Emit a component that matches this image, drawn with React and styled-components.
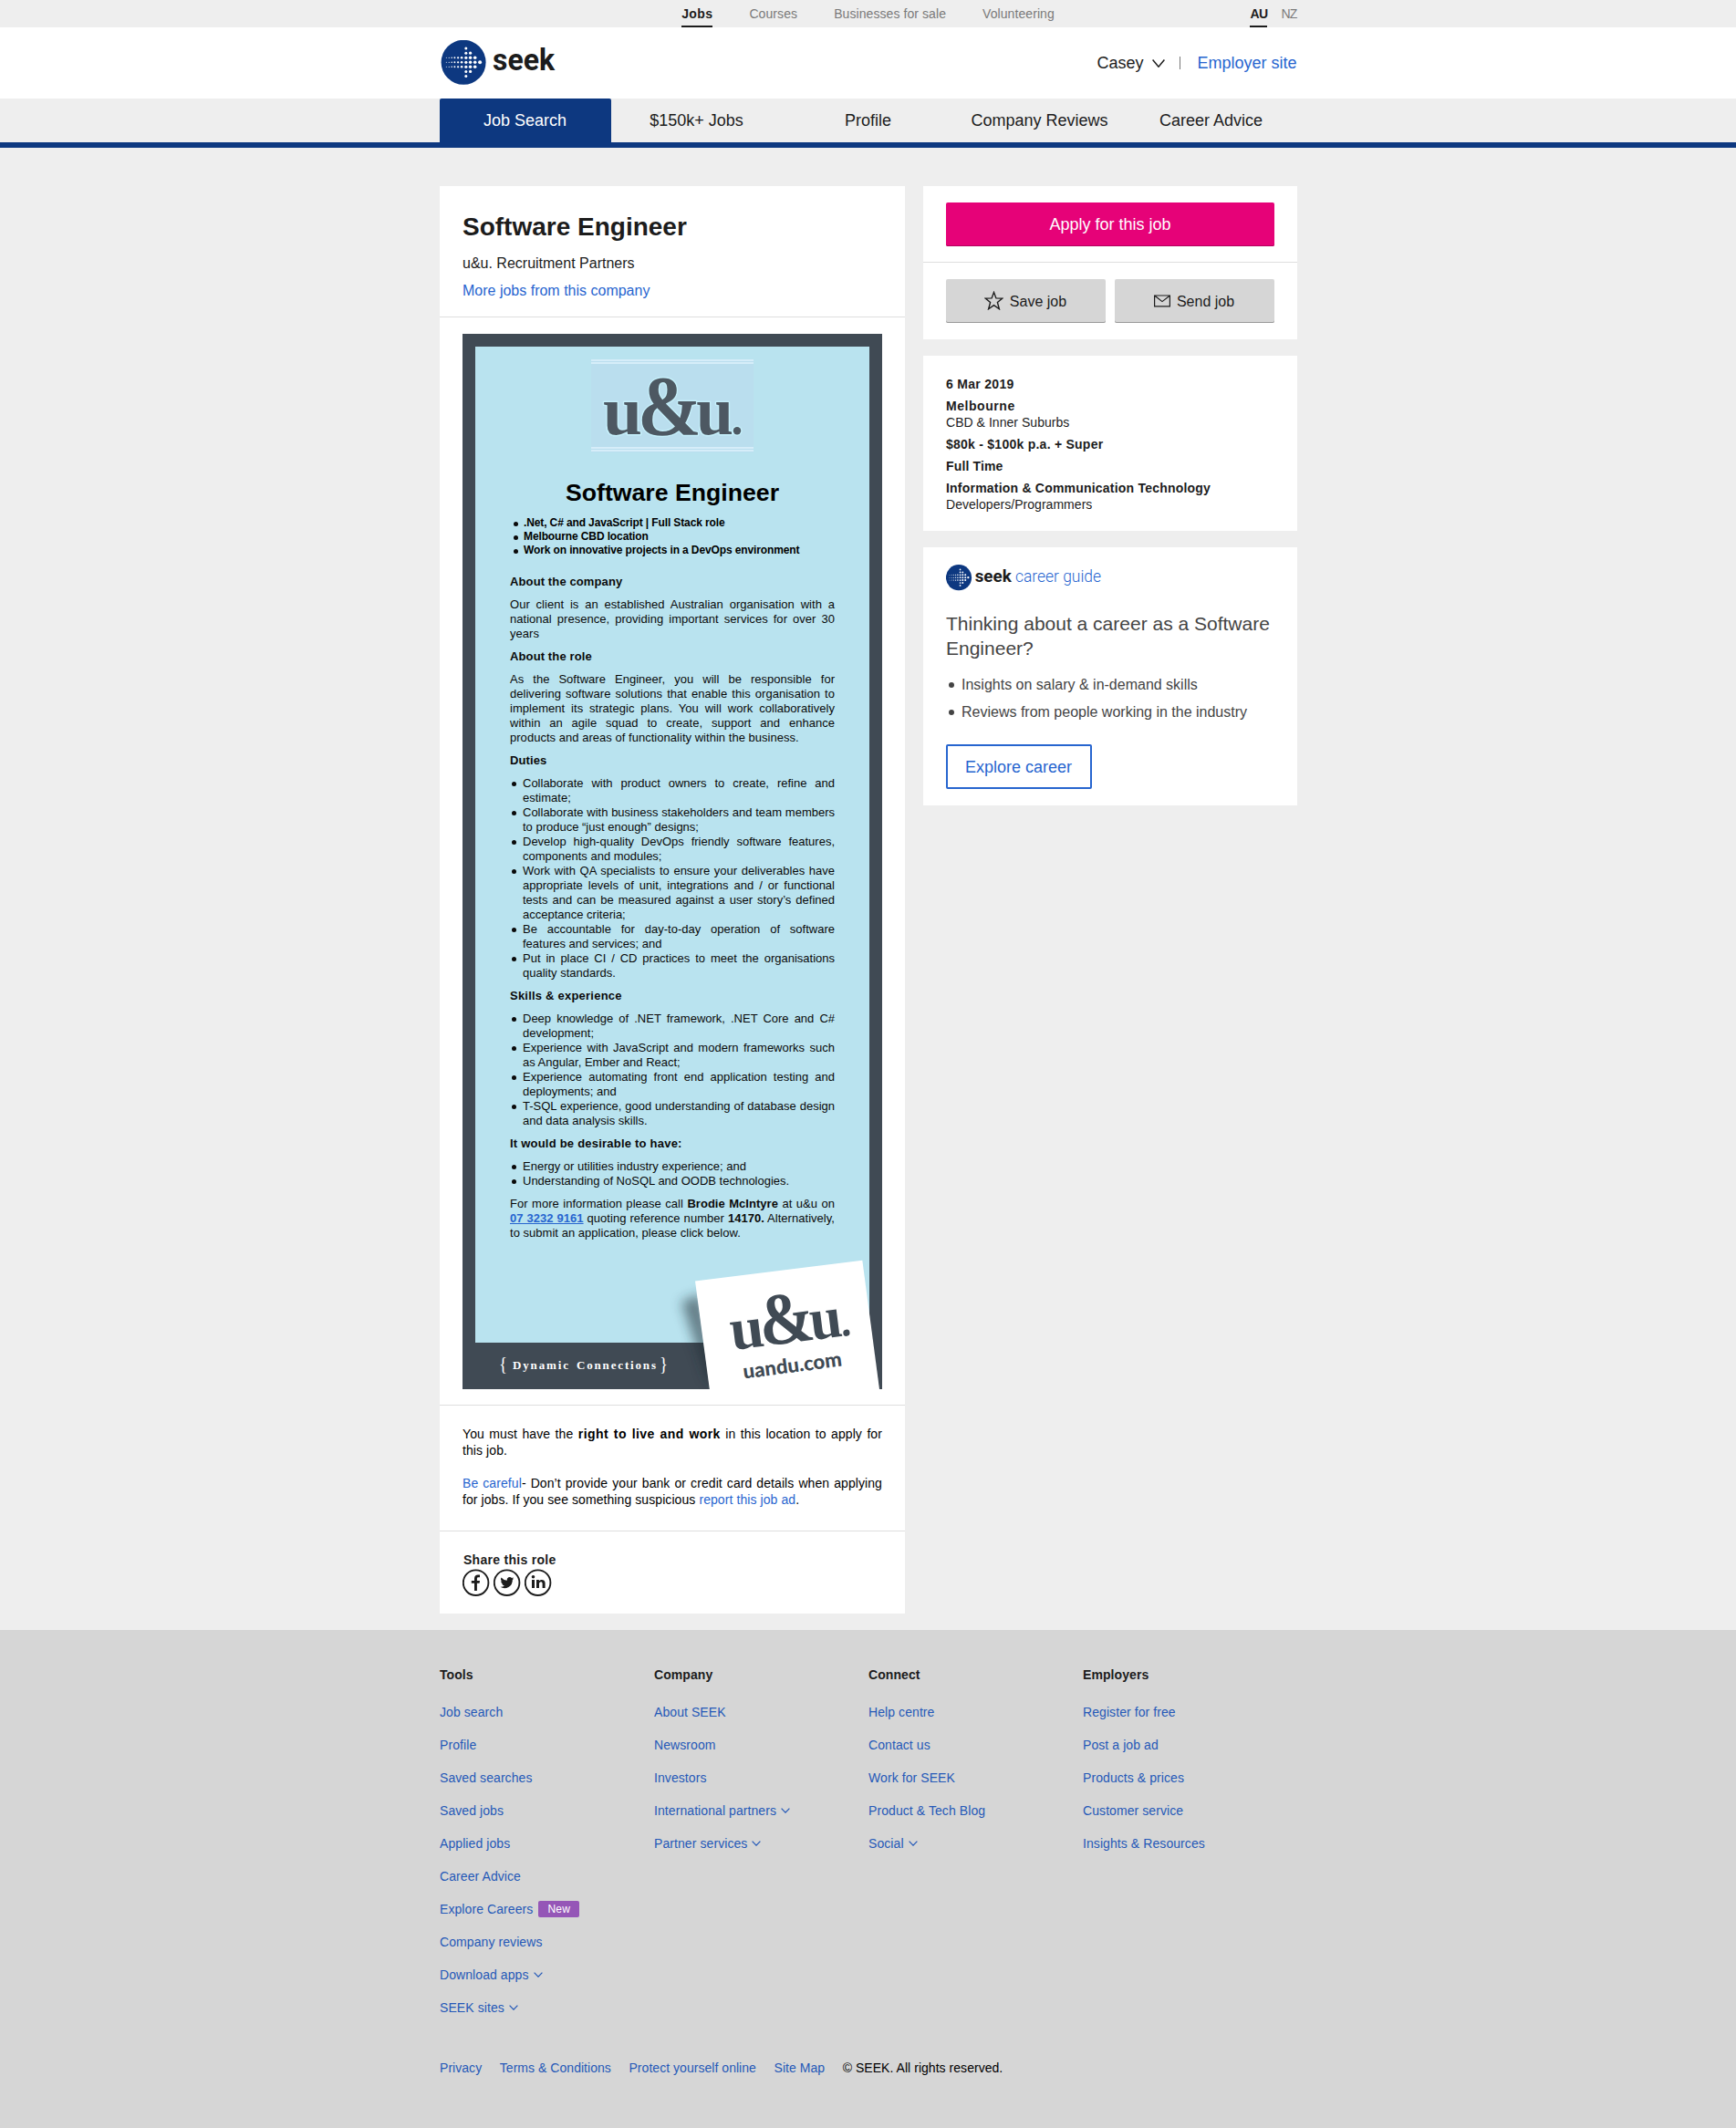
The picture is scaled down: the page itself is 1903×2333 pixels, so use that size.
import React from "react";
import styled, { createGlobalStyle, css } from "styled-components";

const navy = "#0d3880";
const ink = "#1c1c1c";
const link = "#2765cf";
const slate = "#404a54";

const GlobalStyle = createGlobalStyle`
  *, *::before, *::after { box-sizing: border-box; }
  body {
    margin: 0;
    background: #eee;
    color: ${ink};
    font-family: "Liberation Sans", Arial, Helvetica, sans-serif;
    font-size: 14px;
    line-height: 18px;
  }
  h1, h2, h3, h4, p, ul { margin: 0; padding: 0; }
  ul { list-style: none; }
  a { color: inherit; text-decoration: none; }
`;

const Centered = styled.div`
  width: 940px;
  margin: 0 auto;
`;

const Container = styled.div`
  width: 940px;
  margin: 0 0 0 calc(50% - 469.5px);
`;

/* ---------- top bars ---------- */

const TopBar = styled(Centered)`
  display: grid;
  grid-template-columns: 1fr auto 1fr;
  height: 30px;
`;

const TopGroup = styled.nav`
  display: flex;
  grid-column: ${(p) => p.$column};
  justify-content: flex-end;
  gap: ${(p) => p.$gap}px;
`;

const TopLink = styled.a`
  line-height: 30px;
  color: #7a7a7a;
  letter-spacing: ${(p) => p.$track ?? 0.08}px;
  ${(p) =>
    p.$active &&
    css`
      color: ${ink};
      font-weight: bold;
      box-shadow: inset 0 -2px 0 ${ink};
    `}
`;

const Masthead = styled.header`
  background: #fff;
`;

const MastheadRow = styled(Centered)`
  display: flex;
  align-items: center;
  justify-content: space-between;
  height: 78px;
  font-size: 18px;
`;

const Account = styled.div`
  display: flex;
  align-items: center;
`;

const AccountName = styled.span`
  margin-right: 10px;
`;

const Separator = styled.span`
  width: 1px;
  height: 14px;
  margin: 0 18px 0 16px;
  background: #777;
`;

const EmployerLink = styled.a`
  color: ${link};
`;

const NavBar = styled.nav`
  border-bottom: 6px solid ${navy};
`;

const NavRow = styled(Centered)`
  display: grid;
  grid-template-columns: repeat(5, 1fr);
`;

const NavTab = styled.a`
  height: 48px;
  border-radius: 2px 2px 0 0;
  font-size: 18px;
  line-height: 48px;
  text-align: center;
  ${(p) => p.$active && `background: ${navy}; color: #fff;`}
`;

/* ---------- page columns ---------- */

const Main = styled(Container)`
  display: grid;
  grid-template-columns: 510px 410px;
  gap: 20px;
  align-items: start;
  padding: 42px 0 18px;
`;

const Sidebar = styled.aside`
  display: flex;
  flex-direction: column;
  gap: 18px;
`;

const Card = styled.section`
  background: #fff;
`;

const Section = styled.div`
  padding: ${(p) => p.$pad};
  & + & { border-top: 1px solid #dedede; }
`;

const JobTitle = styled.h1`
  font-size: 28px;
  line-height: 35px;
`;

const Company = styled.p`
  margin-top: 8px;
  font-size: 16px;
  line-height: 29px;
`;

const MoreJobs = styled.a`
  display: block;
  margin-top: 1px;
  color: ${link};
  font-size: 16px;
  line-height: 29px;
`;

/* ---------- advertisement ---------- */

const Ad = styled.article`
  position: relative;
  height: 1157px;
  padding: 14px 38px 0;
  border: solid ${slate};
  border-width: 14px 14px 51px;
  background: #b9e3ef;
  color: #0a0a0a;
  font-size: 13px;
  line-height: 16px;
`;

const AdLogo = styled.div`
  width: 178px;
  height: 102px;
  margin: 0 auto;
  svg { display: block; overflow: visible; }
`;

const AdTitle = styled.h2`
  margin-top: 29px;
  color: #000;
  font-size: 26.67px;
  line-height: 30px;
  text-align: center;
`;

const AdHeading = styled.h3`
  margin-top: ${(p) => p.$top || 9}px;
  font-size: 13px;
  letter-spacing: ${(p) => p.$track ?? 0.12}px;
`;

const AdText = styled.p`
  margin-top: 9px;
  letter-spacing: 0.03px;
  text-align: justify;
`;

const AdList = styled.ul`
  margin-top: 9px;
  text-align: justify;
`;

const AdItem = styled.li`
  display: grid;
  grid-template-columns: 14px 1fr;
  &::before {
    content: "";
    width: 5px;
    height: 5px;
    margin: 6px 0 0 2px;
    border-radius: 50%;
    background: #0a0a0a;
  }
`;

const Highlights = styled(AdList)`
  margin-top: 11px;
  color: #000;
  font-size: 12px;
  font-weight: bold;
  line-height: 15px;
  letter-spacing: -0.12px;
  text-align: left;
  ${AdItem} {
    grid-template-columns: 15px 1fr;
    &::before { margin: 6px 0 0 4px; }
  }
`;

const Phone = styled.a`
  color: ${link};
  font-weight: bold;
  text-decoration: underline;
`;

const AdFoot = styled.svg`
  position: absolute;
  left: -14px;
  bottom: -51px;
`;

/* ---------- notices and share ---------- */

const Notice = styled.p`
  color: #000;
  letter-spacing: 0.08px;
  text-align: justify;
  & + & { margin-top: 18px; }
  a { color: ${link}; }
  b { letter-spacing: 0.42px; }
`;

const ShareTitle = styled.h4`
  padding-left: 1px;
  font-size: 14px;
  letter-spacing: 0.28px;
`;

const ShareRow = styled.div`
  display: flex;
  gap: 4px;
  margin-top: 1px;
`;

/* ---------- sidebar parts ---------- */

const ApplyButton = styled.a`
  display: block;
  height: 48px;
  border-radius: 2px;
  background: #e60278;
  box-shadow: inset 0 -1px 0 #b3025e;
  color: #fff;
  font-size: 18px;
  line-height: 48px;
  text-align: center;
`;

const ButtonPair = styled.div`
  display: grid;
  grid-template-columns: 1fr 1fr;
  gap: 10px;
`;

const GreyButton = styled.a`
  display: flex;
  align-items: center;
  justify-content: center;
  gap: 7px;
  height: 48px;
  padding-right: 1px;
  border-radius: 2px;
  background: #d6d6d6;
  box-shadow: inset 0 -1px 0 #999;
  font-size: 16px;
  line-height: 49px;
`;

const Facts = styled.div`
  display: flex;
  flex-direction: column;
  gap: 6px;
`;

const Fact = styled.div`
  strong, span { display: block; }
  strong { letter-spacing: ${(p) => p.$track}px; }
  span { letter-spacing: 0.04px; }
`;

const GuideLogo = styled.svg`
  display: block;
`;

const GuideTitle = styled.h3`
  margin-top: 22px;
  color: #444;
  font-size: 21px;
  font-weight: normal;
  line-height: 27px;
`;

const GuideList = styled.ul`
  display: grid;
  gap: 1px;
  margin-top: 12px;
  color: #444;
  font-size: 16px;
  line-height: 29px;
  li { display: flex; align-items: center; }
  li::before {
    content: "";
    width: 6px;
    height: 6px;
    margin: 1px 8px 0 3px;
    border-radius: 50%;
    background: #444;
  }
`;

const ExploreButton = styled.a`
  display: block;
  width: 160px;
  height: 49px;
  margin-top: 21px;
  padding-right: 1px;
  border: 2px solid ${link};
  border-radius: 2px;
  color: ${link};
  font-size: 18px;
  line-height: 46px;
  text-align: center;
`;

/* ---------- footer ---------- */

const Footer = styled.footer`
  min-height: 546px;
  padding-top: 40px;
  background: #d6d6d6;
  letter-spacing: 0.08px;
`;

const FooterColumns = styled(Container)`
  display: grid;
  grid-template-columns: repeat(4, 1fr);
`;

const FooterHeading = styled.h4`
  margin-bottom: 23px;
  font-size: 14px;
`;

const FooterList = styled.ul`
  display: grid;
  gap: 18px;
`;

const FooterLink = styled.li`
  display: flex;
  align-items: center;
  height: 18px;
  color: #2559b8;
  white-space: nowrap;
  svg { margin-left: 5px; }
`;

const NewBadge = styled.span`
  width: 45px;
  margin-left: 6px;
  border-radius: 2px;
  background: #9556b7;
  color: #fff;
  font-size: 12px;
  line-height: 18px;
  letter-spacing: 0.3px;
  text-align: center;
`;

const Legal = styled(Container)`
  display: flex;
  gap: 19.6px;
  margin-top: 48px;
  color: #000;
  letter-spacing: 0.04px;
  a { color: #2559b8; }
`;

/* ---------- drawings ---------- */

const trail = [[-18.8, 0.5], [-15.9, 0.6], [-12.9, 0.8], [-9.7, 0.95], [-6, 1.1], [-2, 1.3], [2.7, 1.6], [7.5, 1.7], [12.6, 1.8]];
const dotRows = [
  { y: 0, xs: [...trail, [18, 2]] },
  { y: -5, xs: trail },
  { y: 5, xs: trail },
  { y: -10.1, xs: [[2.7, 1.5], [7.5, 1.6]] },
  { y: 10.1, xs: [[2.7, 1.5], [7.5, 1.6]] },
  { y: -15.2, xs: [[2.7, 1.5]] },
  { y: 15.2, xs: [[2.7, 1.5]] },
];

const Roundel = ({ x, y, scale = 1 }) => (
  <g transform={`translate(${x} ${y}) scale(${scale})`}>
    <circle r="24.5" fill={navy} />
    {dotRows.map((row) =>
      row.xs.map(([cx, r]) => <circle key={`${row.y}:${cx}`} cx={cx} cy={row.y} r={r} fill="#fff" />)
    )}
  </g>
);

const SeekLogo = () => (
  <svg width="130" height="50" viewBox="0 0 130 50">
    <Roundel x={26.1} y={24.3} />
    <text x="58" y="32.7" fontFamily="Roboto, sans-serif" fontWeight="700" fontSize="32.5" fill={ink} textLength="68" lengthAdjust="spacingAndGlyphs">seek</text>
  </svg>
);

const Chevron = ({ width = 10, height = 6, color = "#2559b8", weight = 1.2 }) => (
  <svg width={width} height={height} viewBox={`0 0 ${width} ${height}`}>
    <path d={`M.6 .6 L${width / 2} ${height - 0.8} L${width - 0.6} .6`} fill="none" stroke={color} strokeWidth={weight} />
  </svg>
);

const StarSvg = styled.svg`
  margin-bottom: 2px;
`;

const StarIcon = () => (
  <StarSvg width="21" height="21" viewBox="0 0 20 20">
    <path d="M10 1.4 L12.3 7.5 L18.9 7.7 L13.7 11.9 L15.6 18.8 L10 14.9 L4.4 18.8 L6.3 11.9 L1.1 7.7 L7.7 7.5 Z" fill="none" stroke={ink} strokeWidth="1.3" />
  </StarSvg>
);

const MailIcon = () => (
  <svg width="18" height="14" viewBox="0 0 18 14">
    <path d="M.6 1 H17.4 V12.8 H.6 Z M.8 1.2 L9 7.6 L17.2 1.2" fill="none" stroke={ink} strokeWidth="1.2" />
  </svg>
);

const UandU = ({ halo }) => (
  <g
    fontFamily="'Liberation Serif', 'Times New Roman', serif"
    fontWeight="bold"
    fill={halo ? "#4d5862" : slate}
    stroke={halo ? "#c5effa" : "none"}
    strokeWidth="3"
    paintOrder="stroke"
    strokeLinejoin="round"
  >
    <text x="-1" y="63" fontSize="76" textLength="43" lengthAdjust="spacingAndGlyphs">u</text>
    <text x="101" y="63" fontSize="76" textLength="41" lengthAdjust="spacingAndGlyphs">u</text>
    <text x="37" y="63" fontSize="94" textLength="70" lengthAdjust="spacingAndGlyphs">&amp;</text>
    <circle cx="146" cy="59.5" r="4.2" />
  </g>
);

const AdLogoArt = () => (
  <svg width="178" height="102" viewBox="0 0 178 102">
    <rect width="178" height="102" fill="#badeee" />
    {[0, 3, 96, 99].map((y) => (
      <rect key={y} x="0" y={y} width="178" height="2" fill="#d6edf9" />
    ))}
    <g transform="translate(14 18.7)">
      <UandU halo />
    </g>
  </svg>
);

const AdFootArt = () => (
  <AdFoot width="460" height="150" viewBox="0 0 460 150">
    <defs>
      <filter id="soft" x="-60%" y="-50%" width="220%" height="200%">
        <feGaussianBlur stdDeviation="6.5" />
      </filter>
    </defs>
    <path d="M240 54 L262 46 L282 150 L268 138 Z" fill="#1c2a33" opacity="0.55" filter="url(#soft)" />
    <g fill="#fff" fontFamily="'Liberation Serif', serif">
      <text x="40" y="129" fontSize="21" textLength="9" lengthAdjust="spacingAndGlyphs">{"{"}</text>
      <text x="55" y="128" fontWeight="bold" fontSize="13" textLength="61">Dynamic</text>
      <text x="125" y="128" fontWeight="bold" fontSize="13" textLength="87">Connections</text>
      <text x="216" y="129" fontSize="21" textLength="9" lengthAdjust="spacingAndGlyphs">{"}"}</text>
    </g>
    <path d="M255 31.5 L438.3 8.7 L457 150 L270.8 150 Z" fill="#fff" />
    <g transform="translate(290 53) rotate(-7.1) scale(.86)">
      <UandU />
    </g>
    <text transform="translate(308.5 138.5) rotate(-7.4)" fontFamily="Lato, sans-serif" fontWeight="900" fontSize="22" fill={slate} textLength="109" lengthAdjust="spacingAndGlyphs">uandu.com</text>
  </AdFoot>
);

const ShareIcon = ({ children }) => (
  <svg width="30" height="30" viewBox="0 0 30 30">
    <circle cx="14.6" cy="15.2" r="13.8" fill="none" stroke={ink} strokeWidth="1.9" />
    {children}
  </svg>
);

/* ---------- content ---------- */

const duties = [
  "Collaborate with product owners to create, refine and estimate;",
  "Collaborate with business stakeholders and team members to produce “just enough” designs;",
  "Develop high-quality DevOps friendly software features, components and modules;",
  "Work with QA specialists to ensure your deliverables have appropriate levels of unit, integrations and / or functional tests and can be measured against a user story’s defined acceptance criteria;",
  "Be accountable for day-to-day operation of software features and services; and",
  "Put in place CI / CD practices to meet the organisations quality standards.",
];

const skills = [
  "Deep knowledge of .NET framework, .NET Core and C# development;",
  "Experience with JavaScript and modern frameworks such as Angular, Ember and React;",
  "Experience automating front end application testing and deployments; and",
  "T-SQL experience, good understanding of database design and data analysis skills.",
];

const desirable = [
  "Energy or utilities industry experience; and",
  "Understanding of NoSQL and OODB technologies.",
];

const footer = [
  ["Tools", ["Job search", "Profile", "Saved searches", "Saved jobs", "Applied jobs", "Career Advice", "Explore Careers*", "Company reviews", "Download apps>", "SEEK sites>"]],
  ["Company", ["About SEEK", "Newsroom", "Investors", "International partners>", "Partner services>"]],
  ["Connect", ["Help centre", "Contact us", "Work for SEEK", "Product & Tech Blog", "Social>"]],
  ["Employers", ["Register for free", "Post a job ad", "Products & prices", "Customer service", "Insights & Resources"]],
];

const Items = ({ items }) => items.map((t) => <AdItem key={t}><span>{t}</span></AdItem>);

export default function App() {
  return (
    <>
      <GlobalStyle />
      <TopBar>
        <TopGroup $column={2} $gap={40}>
          <TopLink $active $track={0.4}>Jobs</TopLink>
          <TopLink>Courses</TopLink>
          <TopLink>Businesses for sale</TopLink>
          <TopLink>Volunteering</TopLink>
        </TopGroup>
        <TopGroup $column={3} $gap={15}>
          <TopLink $active $track={-0.6}>AU</TopLink>
          <TopLink $track={-0.8}>NZ</TopLink>
        </TopGroup>
      </TopBar>
      <Masthead>
        <MastheadRow>
          <SeekLogo />
          <Account>
            <AccountName>Casey</AccountName>
            <Chevron width={14} height={9} color={ink} weight={1.5} />
            <Separator />
            <EmployerLink>Employer site</EmployerLink>
          </Account>
        </MastheadRow>
      </Masthead>
      <NavBar>
        <NavRow>
          <NavTab $active>Job Search</NavTab>
          <NavTab>$150k+ Jobs</NavTab>
          <NavTab>Profile</NavTab>
          <NavTab>Company Reviews</NavTab>
          <NavTab>Career Advice</NavTab>
        </NavRow>
      </NavBar>

      <Main as="main">
        <Card>
          <Section $pad="27px 25px 14px">
            <JobTitle>Software Engineer</JobTitle>
            <Company>u&amp;u. Recruitment Partners</Company>
            <MoreJobs>More jobs from this company</MoreJobs>
          </Section>
          <Section $pad="18px 25px 17px">
            <Ad>
              <AdLogo><AdLogoArt /></AdLogo>
              <AdTitle>Software Engineer</AdTitle>
              <Highlights>
                <Items items={[".Net, C# and JavaScript | Full Stack role", "Melbourne CBD location", "Work on innovative projects in a DevOps environment"]} />
              </Highlights>
              <AdHeading $top={19}>About the company</AdHeading>
              <AdText>Our client is an established Australian organisation with a national presence, providing important services for over 30 years</AdText>
              <AdHeading>About the role</AdHeading>
              <AdText>As the Software Engineer, you will be responsible for delivering software solutions that enable this organisation to implement its strategic plans. You will work collaboratively within an agile squad to create, support and enhance products and areas of functionality within the business.</AdText>
              <AdHeading>Duties</AdHeading>
              <AdList><Items items={duties} /></AdList>
              <AdHeading $track={0.22}>Skills &amp; experience</AdHeading>
              <AdList><Items items={skills} /></AdList>
              <AdHeading $track={0.22}>It would be desirable to have:</AdHeading>
              <AdList><Items items={desirable} /></AdList>
              <AdText>
                For more information please call <b>Brodie McIntyre</b> at u&amp;u on <Phone>07 3232 9161</Phone> quoting reference number <b>14170.</b> Alternatively, to submit an application, please click below.
              </AdText>
              <AdFootArt />
            </Ad>
          </Section>
          <Section $pad="22px 25px 25px">
            <Notice>You must have the <b>right to live and work</b> in this location to apply for this&nbsp;job.</Notice>
            <Notice><a>Be careful</a>- Don’t provide your bank or credit card details when applying for jobs. If you see something suspicious <a>report this job ad</a>.</Notice>
          </Section>
          <Section $pad="22px 25px 19px">
            <ShareTitle>Share this role</ShareTitle>
            <ShareRow>
              <ShareIcon>
                <path d="M13 24 V15.8 H9.8 V13 H13 V10.6 C13 7.8 14.6 6.4 17 6.4 H19 V9.2 H17.4 C16.2 9.2 15.9 9.8 15.9 10.8 V13 H19 L18.6 15.8 H15.9 V24 Z" fill={ink} />
              </ShareIcon>
              <ShareIcon>
                <path transform="translate(7 7.2) scale(.65)" d="M23.6 4.9c-.85.4-1.7.6-2.7.75.96-.6 1.7-1.5 2.05-2.6-.9.55-1.9.9-2.95 1.15A4.7 4.7 0 0 0 12 8.5 13.3 13.3 0 0 1 2.3 3.6a4.7 4.7 0 0 0 1.45 6.25 4.6 4.6 0 0 1-2.1-.6c0 2.3 1.6 4.2 3.75 4.65-.7.2-1.4.2-2.1.1a4.7 4.7 0 0 0 4.35 3.25A9.4 9.4 0 0 1 .7 19.2 13.3 13.3 0 0 0 21.2 7.35c.95-.7 1.75-1.5 2.4-2.45z" fill={ink} />
              </ShareIcon>
              <ShareIcon>
                <path d="M8 12 H11 V21 H8 Z M13 12 H15.9 V13.3 C17 11.3 22.6 11 22.6 15.6 V21 H19.6 V16.2 C19.6 13.6 16 13.7 16 16.4 V21 H13 Z" fill={ink} />
                <circle cx="9.5" cy="8.8" r="1.8" fill={ink} />
              </ShareIcon>
            </ShareRow>
          </Section>
        </Card>

        <Sidebar>
          <Card>
            <Section $pad="18px 25px 17px">
              <ApplyButton>Apply for this job</ApplyButton>
            </Section>
            <Section $pad="18px 25px">
              <ButtonPair>
                <GreyButton><StarIcon />Save job</GreyButton>
                <GreyButton><MailIcon />Send job</GreyButton>
              </ButtonPair>
            </Section>
          </Card>
          <Card>
            <Section $pad="22px 25px 20px">
              <Facts>
                <Fact $track={0.3}><strong>6 Mar 2019</strong></Fact>
                <Fact $track={0.55}><strong>Melbourne</strong><span>CBD &amp; Inner Suburbs</span></Fact>
                <Fact $track={0.25}><strong>$80k - $100k p.a. + Super</strong></Fact>
                <Fact $track={0.15}><strong>Full Time</strong></Fact>
                <Fact $track={0.21}><strong>Information &amp; Communication Technology</strong><span>Developers/Programmers</span></Fact>
              </Facts>
            </Section>
          </Card>
          <Card>
            <Section $pad="19px 25px 18px">
              <GuideLogo width="180" height="29" viewBox="0 0 180 29">
                <Roundel x={14} y={14.2} scale={0.575} />
                <g fontFamily="Roboto, sans-serif">
                  <text x="31.7" y="19" fontWeight="700" fontSize="19" fill={ink} textLength="40" lengthAdjust="spacingAndGlyphs">seek</text>
                  <text x="76" y="19" fontWeight="300" fontSize="18" fill={link} textLength="94" lengthAdjust="spacingAndGlyphs">career guide</text>
                </g>
              </GuideLogo>
              <GuideTitle>Thinking about a career as a Software Engineer?</GuideTitle>
              <GuideList>
                <li>Insights on salary &amp; in-demand skills</li>
                <li>Reviews from people working in the industry</li>
              </GuideList>
              <ExploreButton>Explore career</ExploreButton>
            </Section>
          </Card>
        </Sidebar>
      </Main>

      <Footer>
        <FooterColumns>
          {footer.map(([title, items]) => (
            <div key={title}>
              <FooterHeading>{title}</FooterHeading>
              <FooterList>
                {items.map((t) => (
                  <FooterLink key={t}>
                    <a>{t.replace(/[*>]$/, "")}</a>
                    {t.endsWith("*") && <NewBadge>New</NewBadge>}
                    {t.endsWith(">") && <Chevron />}
                  </FooterLink>
                ))}
              </FooterList>
            </div>
          ))}
        </FooterColumns>
        <Legal>
          <a>Privacy</a>
          <a>Terms &amp; Conditions</a>
          <a>Protect yourself online</a>
          <a>Site Map</a>
          <span>© SEEK. All rights reserved.</span>
        </Legal>
      </Footer>
    </>
  );
}
